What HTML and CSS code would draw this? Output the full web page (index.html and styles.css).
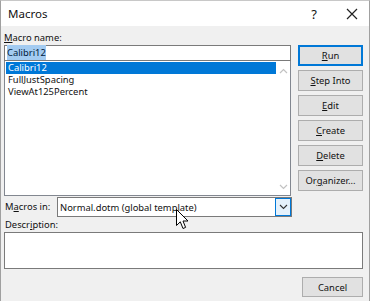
FILE: index.html
```
<!DOCTYPE html>
<html lang="en">
<head>
    <meta charset="UTF-8">
    <title>Macros</title>
    <link rel="stylesheet" href="styles.css">
</head>
<body>
    <div class="window">
        <header class="titlebar">
            <span class="title">Macros</span>
            <span class="help">?</span>
            <span class="close">
                <svg width="12" height="12" viewBox="0 0 12 12"><path d="M1 1 L11 11 M11 1 L1 11" stroke="#222" stroke-width="1.2"/></svg>
            </span>
        </header>
        <main class="content">
            <div class="top">
                <div class="left">
                    <label class="label"><u>M</u>acro name:</label>
                    <div class="name-input"><span class="sel">Calibri12</span></div>
                    <div class="listbox">
                        <ul class="items">
                            <li class="active">Calibri12</li>
                            <li>FullJustSpacing</li>
                            <li>ViewAt125Percent</li>
                        </ul>
                        <div class="scrollbar">
                            <svg width="9" height="6" viewBox="0 0 9 6"><path d="M1 5 L4.5 1.5 L8 5" fill="none" stroke="#c2c2c2" stroke-width="1.2"/></svg>
                            <svg width="9" height="6" viewBox="0 0 9 6"><path d="M1 1 L4.5 4.5 L8 1" fill="none" stroke="#c2c2c2" stroke-width="1.2"/></svg>
                        </div>
                    </div>
                </div>
                <div class="buttons">
                    <button class="btn default"><u>R</u>un</button>
                    <button class="btn"><u>S</u>tep Into</button>
                    <button class="btn"><u>E</u>dit</button>
                    <button class="btn"><u>C</u>reate</button>
                    <button class="btn"><u>D</u>elete</button>
                    <button class="btn">Or<u>g</u>anizer...</button>
                </div>
            </div>
            <div class="macros-in">
                <label class="label">M<u>a</u>cros in:</label>
                <div class="select">
                    <span class="select-text">Normal.dotm (global template)</span>
                    <span class="select-arrow">
                        <svg width="9" height="6" viewBox="0 0 9 6"><path d="M1 1 L4.5 4.5 L8 1" fill="none" stroke="#333" stroke-width="1.1"/></svg>
                    </span>
                </div>
            </div>
            <label class="label desc-label">Descr<u>i</u>ption:</label>
            <div class="description"></div>
            <div class="footer">
                <button class="btn cancel">Cancel</button>
            </div>
        </main>
        <svg class="cursor" width="14" height="22" viewBox="0 0 14 22">
            <path d="M0.5 0.5 L0.5 16.5 L4.3 12.8 L7 19.5 L9.6 18.4 L7 12 L12 12 Z" fill="#fff" stroke="#000" stroke-width="1"/>
        </svg>
    </div>
</body>
</html>
```

FILE: styles.css
```
* {
    padding: 0;
    margin: 0;
    box-sizing: border-box;
}

body {
    width: 370px;
    height: 301px;
    overflow: hidden;
    font-family: "Noto Sans", "Open Sans", sans-serif;
    font-size: 9.4px;
    color: #111;
    background-color: #f0f0f0;
}

.window {
    position: relative;
    height: 301px;
    border-left: 1px solid #a0a0a0;
    border-right: 1px solid #a0a0a0;
    border-top: 1px solid #c8c8c8;
    background-color: #f0f0f0;
}

.titlebar {
    height: 25px;
    background-color: #fff;
    display: flex;
    align-items: center;
    padding-left: 7px;
}

.title {
    flex: 1;
    font-size: 11.5px;
}

.help {
    width: 34px;
    font-size: 13px;
    text-align: center;
    margin-right: 4px;
}

.close {
    width: 34px;
    display: flex;
    justify-content: center;
}

.content {
    padding: 5px 6px 0 3px;
}

.label {
    display: block;
    height: 14px;
    line-height: 14px;
    white-space: nowrap;
}

.top {
    display: flex;
    gap: 7px;
}

.left {
    width: 288px;
    display: flex;
    flex-direction: column;
}

.name-input {
    height: 16px;
    background-color: #fff;
    border: 1px solid #7a7a7a;
    padding-left: 2px;
    line-height: 14px;
}

.sel {
    background-color: #a3cbf1;
    color: #001a40;
    padding: 1px 0;
}

.listbox {
    height: 135px;
    background-color: #fff;
    border: 1px solid #828790;
    border-top: none;
    display: flex;
}

.items {
    list-style: none;
    flex: 1;
    padding: 1px 0 0 1px;
}

.items li {
    height: 12px;
    line-height: 12px;
    padding-left: 2px;
}

.items li.active {
    background-color: #0078d7;
    color: #fff;
}

.scrollbar {
    width: 14px;
    display: flex;
    flex-direction: column;
    justify-content: space-between;
    align-items: center;
    padding: 7px 0 5px;
}

.buttons {
    padding-top: 14px;
    display: flex;
    flex-direction: column;
    gap: 4px;
}

.btn {
    width: 65px;
    height: 21px;
    font-family: inherit;
    font-size: 9.4px;
    color: #111;
    background-color: #e1e1e1;
    border: 1px solid #adadad;
}

.btn.default {
    border: 2px solid #0078d7;
}

.macros-in {
    display: flex;
    align-items: center;
    margin-top: 1px;
    height: 20px;
}

.macros-in .label {
    width: 53px;
    padding-left: 1px;
}

.select {
    width: 235px;
    height: 20px;
    background-color: #fff;
    border: 1px solid #7a7a7a;
    display: flex;
    align-items: center;
}

.select-text {
    flex: 1;
    padding-left: 2px;
}

.select-arrow {
    width: 16px;
    height: 18px;
    border: 1px solid #0078d7;
    background-color: #e5f1fb;
    display: flex;
    align-items: center;
    justify-content: center;
}

.desc-label {
    margin-top: 1px;
    padding-left: 1px;
}

.description {
    height: 37px;
    background-color: #fff;
    border: 1px solid #7a7a7a;
}

.footer {
    display: flex;
    justify-content: flex-end;
    padding-top: 8px;
}

.btn.cancel {
    width: 61px;
    height: 20px;
}

.cursor {
    position: absolute;
    left: 175px;
    top: 208px;
}
```
